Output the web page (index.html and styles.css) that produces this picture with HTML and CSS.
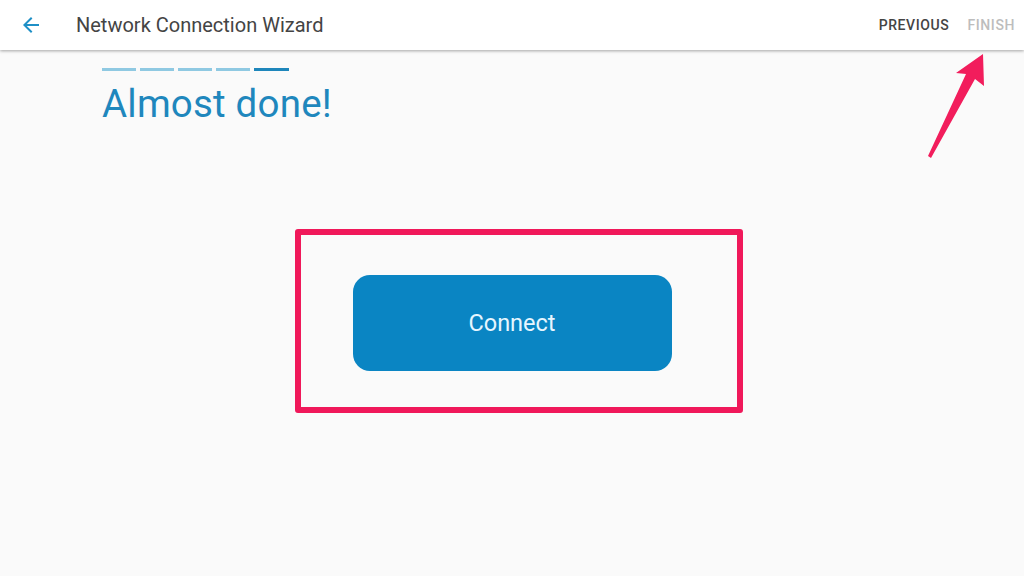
FILE: index.html
```html
<!DOCTYPE html>
<html lang="en">
<head>
  <meta charset="UTF-8">
  <title>Network Connection Wizard</title>
  <link rel="stylesheet" href="styles.css">
</head>
<body>

  <header class="toolbar">
    <button class="back" aria-label="Back">
      <svg width="24" height="24" viewBox="0 0 24 24">
        <path d="M20 11H7.83l5.59-5.59L12 4l-8 8 8 8 1.41-1.41L7.83 13H20v-2z" fill="#1e8fc6"/>
      </svg>
    </button>
    <span class="title">Network Connection Wizard</span>
    <nav class="actions">
      <a class="action">PREVIOUS</a>
      <a class="action disabled">FINISH</a>
    </nav>
  </header>

  <main class="content">
    <div class="steps">
      <span class="step"></span>
      <span class="step"></span>
      <span class="step"></span>
      <span class="step"></span>
      <span class="step current"></span>
    </div>
    <h1>Almost done!</h1>

    <div class="stage">
      <div class="highlight">
        <button class="connect">Connect</button>
      </div>
    </div>
  </main>

  <!-- annotation arrow pointing at FINISH -->
  <svg class="pointer" width="80" height="120" viewBox="0 0 80 120">
    <polygon points="71,3 72,35 63,28 19,107 16,105 54,23 44,22" fill="#f21d5c"/>
  </svg>

</body>
</html>
```

FILE: styles.css
```css
body {
  margin: 0;
  font-family: Roboto, "Noto Sans", sans-serif;
  background-color: #fafafa;
  height: 576px;
  overflow: hidden;
}

.toolbar {
  display: flex;
  align-items: center;
  height: 50px;
  background-color: #fff;
  box-shadow: 0 1px 3px rgba(0, 0, 0, 0.35);
  position: relative;
}

.back {
  border: none;
  background: none;
  padding: 0;
  margin-left: 19px;
  width: 24px;
  height: 24px;
  display: flex;
}

.title {
  margin-left: 33px;
  font-size: 20px;
  color: #444;
}

.actions {
  margin-left: auto;
  display: flex;
  gap: 18px;
  margin-right: 9px;
}

.action {
  font-size: 14px;
  font-weight: 500;
  color: #444;
  letter-spacing: 0.6px;
}

.action.disabled {
  color: #bdbdbd;
}

.content {
  padding: 18px 0 0 102px;
}

.steps {
  display: flex;
  gap: 4px;
}

.step {
  width: 34px;
  height: 3px;
  background-color: #8fc9e2;
}

.step.current {
  width: 35px;
  background-color: #1e86bb;
}

h1 {
  margin: 10px 0 0;
  font-size: 38.5px;
  font-weight: 400;
  letter-spacing: 0.2px;
  color: #1f87bd;
}

.stage {
  display: flex;
  justify-content: center;
  margin: 103px 0 0 -102px;
}

.highlight {
  margin-left: 13px;
  padding: 40px 65px 36px 52px;
  border: 6px solid #f0185a;
  border-radius: 3px;
}

.connect {
  display: block;
  width: 319px;
  height: 96px;
  border: none;
  border-radius: 17px;
  background-color: #0a85c3;
  color: #e6f6ff;
  font-family: Roboto, "Noto Sans", sans-serif;
  font-size: 23.5px;
}

.pointer {
  position: absolute;
  left: 912px;
  top: 51px;
}
```
